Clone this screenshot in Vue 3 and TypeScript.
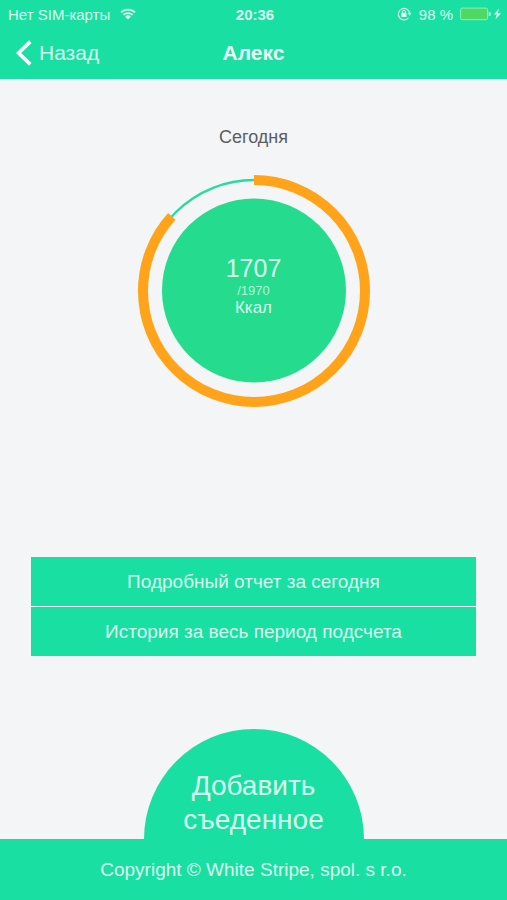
<script setup lang="ts">
import { computed } from 'vue'

const eaten = 1707
const goal = 1970
const radius = 111
const circumference = 2 * Math.PI * radius
const dash = computed(() => `${(eaten / goal) * circumference} ${circumference}`)
const reports: string[] = ['Подробный отчет за сегодня', 'История за весь период подсчета']
</script>

<template>
  <div class="screen">
    <header class="header">
      <div class="status">
        <div class="status-left">
          <span>Нет SIM-карты</span>
          <svg class="wifi" width="16" height="12" viewBox="0 0 16 12" aria-hidden="true">
            <g fill="none" stroke="currentColor" stroke-width="1.8">
              <path d="M1 4.4A10 10 0 0 1 15 4.4" />
              <path d="M3.4 6.9A6.6 6.6 0 0 1 12.6 6.9" />
            </g>
            <path d="M8 11.6L5.2 8.7A4 4 0 0 1 10.8 8.7Z" fill="currentColor" />
          </svg>
        </div>
        <time class="clock">20:36</time>
        <div class="status-right">
          <svg width="15" height="14" viewBox="0 0 15 14" aria-hidden="true">
            <path d="M11.4 10.8A5.7 5.7 0 1 1 12.6 6" fill="none" stroke="currentColor" stroke-width="1.1" />
            <path d="M10.6 5.8H14.6L12.7 8.7Z" fill="currentColor" />
            <rect x="4.3" y="5.8" width="5.2" height="4.2" rx="0.4" fill="currentColor" />
            <path d="M5.3 6.2V5a1.6 1.6 0 0 1 3.2 0V6.2" fill="none" stroke="currentColor" stroke-width="1" />
          </svg>
          <span class="percent">98 %</span>
          <svg class="battery" width="42" height="14" viewBox="0 0 42 14" aria-hidden="true">
            <rect x="0.6" y="1.1" width="27" height="11.6" rx="1.6" fill="#4fd964" stroke="#8df0b8" stroke-width="1" />
            <path d="M28.8 4.9a2.1 2.1 0 0 1 0 4.2Z" fill="currentColor" />
            <path d="M38.9 1.6L34 7.6H36.8L35.4 12.4L41.2 6.2H37.9Z" fill="currentColor" />
          </svg>
        </div>
      </div>
      <nav class="nav">
        <a class="back" href="#">
          <svg width="17" height="26" viewBox="0 0 17 26" aria-hidden="true">
            <path d="M15.3 1.6L3.6 13L15.3 24.4" fill="none" stroke="currentColor" stroke-width="3.6" />
          </svg>
          <span>Назад</span>
        </a>
        <h1 class="title">Алекс</h1>
      </nav>
    </header>

    <main class="main">
      <h2 class="day">Сегодня</h2>
      <div class="meter">
        <svg class="ring" width="232" height="232" viewBox="0 0 232 232" aria-hidden="true">
          <circle cx="116" cy="116" r="111" fill="none" stroke="#29dba0" stroke-width="2.4" />
          <circle
            cx="116" cy="116" :r="radius" fill="none" stroke="#ffa31a" stroke-width="10"
            :stroke-dasharray="dash" transform="rotate(-90 116 116)"
          />
          <circle cx="116" cy="115.4" r="92" fill="#25db8e" />
        </svg>
        <div class="values">
          <span class="eaten">{{ eaten }}</span>
          <span class="goal">/{{ goal }}</span>
          <span class="unit">Ккал</span>
        </div>
      </div>
      <div class="reports">
        <button v-for="label in reports" :key="label" type="button" class="report">{{ label }}</button>
      </div>
    </main>

    <button type="button" class="add">Добавить<br>съеденное</button>
    <footer class="footer">Copyright © White Stripe, spol. s r.o.</footer>
  </div>
</template>

<style>
body {
  background: #f3f5f7;
}
</style>

<style scoped>
.screen {
  display: flex;
  flex-direction: column;
  min-height: 100vh;
  background: #f3f5f7;
  color: #d9fbef;
  font-family: "Liberation Sans", Arial, sans-serif;
}
button {
  border: 0;
  padding: 0;
  font: inherit;
  color: inherit;
  background: #1adfa2;
  cursor: pointer;
}
.header {
  height: 79px;
  background: #1adfa2;
}
.status {
  display: grid;
  grid-template-columns: 1fr auto 1fr;
  align-items: center;
  height: 28px;
  padding: 0 5px 0 8px;
  font-size: 15px;
}
.status-left,
.status-right {
  display: flex;
  align-items: center;
  gap: 7px;
}
.status-left {
  gap: 10px;
}
.status-right {
  justify-content: flex-end;
}
.clock {
  font-weight: 700;
}
.nav {
  display: grid;
  grid-template-columns: 1fr auto 1fr;
  align-items: center;
  height: 49px;
  padding: 0 15px;
}
.back {
  display: flex;
  align-items: center;
  gap: 7px;
  color: inherit;
  font-size: 21px;
  text-decoration: none;
}
.back svg {
  color: #fff;
}
.title {
  margin: 0;
  color: #e9fdf6;
  font-size: 21px;
  font-weight: 700;
}
.main {
  display: flex;
  flex: 1;
  flex-direction: column;
  align-items: center;
  padding: 46px 31px 73px;
}
.day {
  margin: 0;
  color: #5b5d61;
  font-size: 18px;
  font-weight: 400;
  line-height: 24px;
}
.meter {
  display: grid;
  place-items: center;
  margin-top: 26px;
}
.ring,
.values {
  grid-area: 1 / 1;
}
.values {
  display: flex;
  flex-direction: column;
  align-items: center;
  padding-bottom: 12px;
}
.eaten {
  font-size: 25px;
  line-height: 30px;
}
.goal {
  font-size: 13px;
  line-height: 16px;
  color: #b4f3d7;
}
.unit {
  font-size: 17px;
  line-height: 18px;
}
.reports {
  display: flex;
  flex-direction: column;
  gap: 1px;
  align-self: stretch;
  margin-top: auto;
}
.report {
  height: 49px;
  font-size: 19px;
}
.add {
  align-self: center;
  width: 220px;
  height: 110px;
  padding-top: 38px;
  border-radius: 110px 110px 0 0;
  font-size: 28px;
  line-height: 34px;
}
.footer {
  display: flex;
  align-items: center;
  justify-content: center;
  height: 61px;
  background: #1adfa2;
  font-size: 19px;
}
</style>
